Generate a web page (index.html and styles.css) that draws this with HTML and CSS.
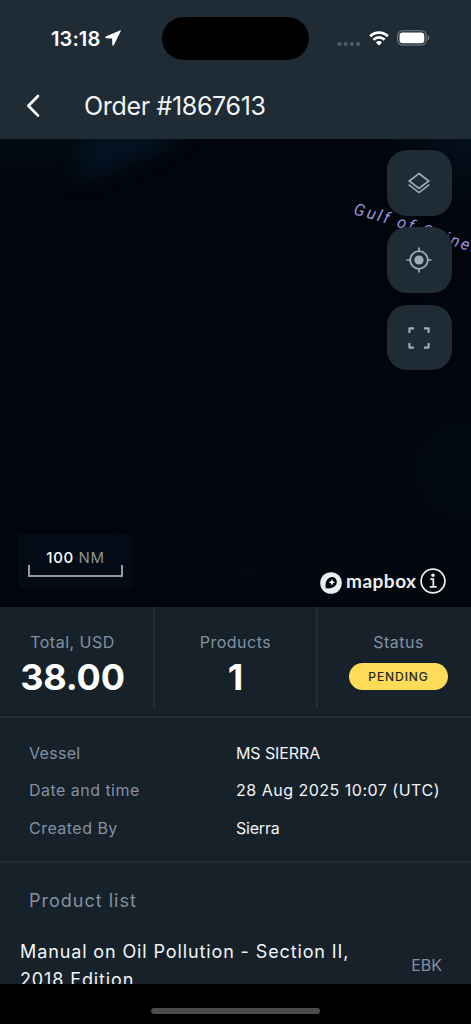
FILE: index.html
```html
<!DOCTYPE html>
<html lang="en">
<head>
<meta charset="utf-8">
<title>Order #1867613</title>
<link rel="stylesheet" href="styles.css">
</head>
<body>
<div class="screen">
  <header class="header">
    <div class="status-bar">
      <div class="clock"><span class="clock-time">13:18</span>
        <svg class="location" width="16" height="16" viewBox="0 0 16 16"><path d="M14.900.400.800 6.600C-.100 7.100.100 8.200 1 8.200l6.100.200.200 6.500c0 1 1.200 1.100 1.600.200L15.700 1.300c.3-.6-.2-1.200-.8-.9z" fill="#fff"/></svg>
      </div>
      <div class="island"></div>
      <div class="indicators">
        <svg width="24" height="6" viewBox="0 0 24 6" fill="#525d66"><circle cx="2.5" cy="3" r="2.1"/><circle cx="8.7" cy="3" r="2.1"/><circle cx="14.9" cy="3" r="2.1"/><circle cx="21.1" cy="3" r="2.1"/></svg>
        <svg class="wifi" width="20" height="15" viewBox="0 0 20 15" fill="none" stroke="#fff" stroke-width="2.7"><path d="M1.2 5.3a12.5 12.5 0 0 1 17.6 0"/><path d="M4.4 8.7a8 8 0 0 1 11.2 0"/><path d="M10 14.5 6.9 11.4a4.4 4.4 0 0 1 6.2 0z" fill="#fff" stroke="none"/></svg>
        <svg class="battery" width="33" height="16" viewBox="0 0 33 16"><rect x=".6" y=".8" width="28.6" height="14.2" rx="4.8" fill="none" stroke="#77818a" stroke-width="1.1"/><rect x="2.5" y="2.6" width="24.8" height="10.7" rx="3.2" fill="#fff"/><path d="M30.7 5.5c2 .8 2 4 0 4.8z" fill="#77818a"/></svg>
      </div>
    </div>
    <div class="title-bar">
      <svg class="back" width="14" height="24" viewBox="0 0 14 24" fill="none" stroke="#fff" stroke-width="2.7" stroke-linecap="round" stroke-linejoin="round"><path d="M12 2 2.4 11.800 12 21.600"/></svg>
      <h1 class="title">Order #1867613</h1>
    </div>
  </header>

  <main class="map">
    <svg class="sea-label" width="471" height="468" viewBox="0 138 471 468">
      <defs>
        <path id="gulf" d="M353 213Q410 228 500 262"/>
        <filter id="soft" x="-50%" y="-50%" width="200%" height="200%" color-interpolation-filters="sRGB"><feGaussianBlur stdDeviation="9"/></filter>
      </defs>
      <path d="M85 120H195L160 150 110 168 78 182z" fill="#041222" filter="url(#soft)"/>
      <text class="sea-text"><textPath href="#gulf">Gulf of Guinea</textPath></text>
    </svg>
    <div class="controls">
      <button class="control" aria-label="Layers"><svg width="24" height="24" viewBox="0 0 24 24" fill="none" stroke="#a0acb8" stroke-width="1.6"><path d="M12 2.500 21.800 10 12 17.500 2.200 10z"/><path d="M1.700 13.700 12 21.600l10.300-7.900"/></svg></button>
      <button class="control" aria-label="My location"><svg width="26" height="26" viewBox="0 0 26 26" fill="none" stroke="#a0acb8" stroke-width="1.7"><circle cx="13" cy="13" r="8.800"/><circle cx="13" cy="13" r="4.600" fill="#a0acb8" stroke="none"/><path d="M13 .5v3.700M13 21.800v3.700M.5 13h3.700M21.800 13h3.700"/></svg></button>
      <button class="control" aria-label="Full screen"><svg width="24" height="24" viewBox="0 0 24 24" fill="none" stroke="#a0acb8" stroke-width="2.1" stroke-linejoin="round"><path d="M2.400 7V2.400H7M17 2.400h4.600V7M21.600 17v4.600H17M7 21.600H2.400V17"/></svg></button>
    </div>
    <div class="map-footer">
      <div class="scale">
        <div class="scale-text"><b>100</b> NM</div>
        <div class="scale-bar"></div>
      </div>
      <div class="credit">
        <svg width="22" height="22" viewBox="0 0 22 22"><circle cx="11" cy="11" r="10.800" fill="#ebedef"/><path d="M5.700 16.300C5 11.500 6 8.600 8 6.800c2.500-2.300 5.700-2.300 7.500-.400 2 2.100 1.800 5.400-.400 7.600-2.100 2-5.100 2.700-9.400 2.300z" fill="#05080f"/><path d="m11.900 6.900 1 2.300 2.300 1-2.300 1-1 2.300-1-2.300-2.300-1 2.300-1z" fill="#fff"/></svg>
        <span class="wordmark">mapbox</span>
        <svg class="info" width="26" height="26" viewBox="0 0 26 26" fill="none" stroke="#eee" stroke-width="1.700"><circle cx="13" cy="13" r="11.900"/><circle cx="13" cy="7.200" r="1.800" fill="#eee" stroke="none"/><path d="M10.300 11.200h3v7.600M9.700 18.900h7"/></svg>
      </div>
    </div>
  </main>

  <section class="stats">
    <div class="stat stat-total"><span class="stat-label">Total, USD</span><strong class="stat-value">38.00</strong></div>
    <div class="stat stat-products"><span class="stat-label">Products</span><strong class="stat-value">1</strong></div>
    <div class="stat stat-status"><span class="stat-label">Status</span><span class="badge">PENDING</span></div>
  </section>

  <dl class="details">
    <dt>Vessel</dt><dd class="vessel">MS SIERRA</dd>
    <dt>Date and time</dt><dd class="date">28 Aug 2025 10:07 (UTC)</dd>
    <dt>Created By</dt><dd class="creator">Sierra</dd>
  </dl>

  <section class="products">
    <h2 class="products-title">Product list</h2>
    <div class="product">
      <div class="product-name">Manual on Oil Pollution - Section II, 2018 Edition</div>
      <div class="product-type">EBK</div>
    </div>
  </section>
  <footer class="home"><div class="home-bar"></div></footer>
</div>
</body>
</html>
```
FILE: styles.css
```css
* { box-sizing: border-box; }
body { margin: 0; background: #000; font-family: Inter, "Liberation Sans", sans-serif; color: #f2f4f5; }
svg { display: block; flex: none; }
.screen { width: 471px; height: 1024px; overflow: hidden; display: flex; flex-direction: column; background: #17212a; }

.header { flex: 0 0 138.5px; background: #1f2c36; }
.status-bar { height: 76px; display: grid; grid-template-columns: 162px 147px 1fr; align-items: center; }
.clock { display: flex; align-items: center; padding-left: 51px; gap: 5px; color: #fff; }
.clock-time { padding-top: 1px; font-size: 20px; font-weight: 600; letter-spacing: 0.1px; line-height: 24px; }
.island { height: 43px; border-radius: 22px; background: #000; }
.indicators { display: flex; align-items: center; padding-left: 28px; }
.indicators svg:first-child { margin-top: 11px; }
.wifi { margin-left: 8px; }
.battery { margin-left: 8px; }
.title-bar { height: 60px; display: flex; align-items: center; padding-left: 26px; }
.title { margin: -1px 0 0 44px; font-size: 25px; line-height: 30px; font-weight: 400; letter-spacing: -0.33px; }

.map {
  position: relative; flex: 0 0 468px; display: flex; flex-direction: column; justify-content: space-between;
  background:
    radial-gradient(ellipse 150px 60px at 30px 0, #030b14, transparent),
    radial-gradient(ellipse 200px 180px at 471px 330px, #020910, transparent),
    radial-gradient(ellipse 100px 80px at 471px 0, #04101c, transparent),
    radial-gradient(ellipse 180px 60px at 250px 430px, #03070f, transparent),
    #02050c;
}
.sea-label { position: absolute; left: 0; top: 0; }
.sea-text { font: italic 16.5px Roboto, sans-serif; letter-spacing: 2.3px; fill: #9a91df; }
.controls { position: relative; align-self: flex-end; display: flex; flex-direction: column; gap: 11.8px; padding: 11.7px 19px 0 0; }
.control { width: 65.5px; height: 65.5px; border: 0; border-radius: 20px; background: #1f2c36; padding: 0; display: flex; align-items: center; justify-content: center; box-shadow: 0 1px 4px #0006; }
.map-footer { display: flex; justify-content: space-between; align-items: flex-end; padding: 0 25px 12.5px 19px; }
.scale { width: 113px; height: 54px; margin-bottom: 6px; padding: 13px 9px 0; background: #030b16; }
.scale-text { text-align: center; font-size: 15px; line-height: 21px; letter-spacing: .6px; color: #929292; }
.scale-text b { color: #fff; font-weight: 500; }
.scale-bar { width: 95px; height: 12px; margin-top: -3px; border: 2px solid #999; border-top: 0; }
.credit { display: flex; align-items: center; }
.wordmark { margin: -4px 0 0 4px; width: 74px; font: 700 19px/24px Lato, sans-serif; color: #ebedef; letter-spacing: .5px; }
.info { margin-top: -4px; }

.stats { flex: 0 0 111px; display: grid; grid-template-columns: 155px 163px 153px; align-items: start; border-bottom: 2px solid #222e3a; }
.stat { height: 101.5px; padding-top: 23.5px; display: flex; flex-direction: column; align-items: center; border-right: 2px solid #222e3a; }
.stat-total { padding-right: 8px; }
.stat-status { border: 0; padding-left: 8px; }
.stat-label { font-size: 16px; line-height: 24px; letter-spacing: .5px; color: #8490a0; }
.stat-value { font-size: 36px; line-height: 46px; font-weight: 700; color: #fff; letter-spacing: -.2px; }
.badge { width: 99px; height: 27px; margin-top: 9px; border-radius: 14px; background: #ffdc57; color: #17212a; text-align: center; font-size: 12px; line-height: 27px; letter-spacing: .95px; font-weight: 400; -webkit-text-stroke: .2px #17212a; }

.details { flex: 0 0 145px; margin: 0; padding: 16px 20px 0 29px; display: grid; grid-template-columns: 207px 1fr; grid-auto-rows: 37.5px; line-height: 38px; font-size: 16px; border-bottom: 2px solid #222e3a; }
.details dt { color: #8490a0; letter-spacing: .47px; white-space: nowrap; }
.details dt:first-of-type { letter-spacing: .3px; }
.details dd { margin: 0; white-space: nowrap; }
.vessel { letter-spacing: -.1px; }
.date { letter-spacing: .5px; }
.creator { letter-spacing: -.2px; }

.products { flex: 0 0 121px; overflow: hidden; padding: 24px 20px 0; }
.products-title { margin: 0 0 0 9px; font-size: 18px; line-height: 28px; font-weight: 400; letter-spacing: 1px; color: #8490a0; }
.product { margin-top: 23.5px; display: flex; justify-content: space-between; }
.product-name { width: 350px; font-size: 18px; line-height: 28px; letter-spacing: .88px; }
.product-type { margin: 13px 9px 0 0; font-size: 16px; line-height: 28px; color: #8490a0; }
.home { flex: 1; background: #000; padding-top: 24px; }
.home-bar { width: 169px; height: 6px; margin: 0 auto; border-radius: 3px; background: #4b4b4b; }
```
